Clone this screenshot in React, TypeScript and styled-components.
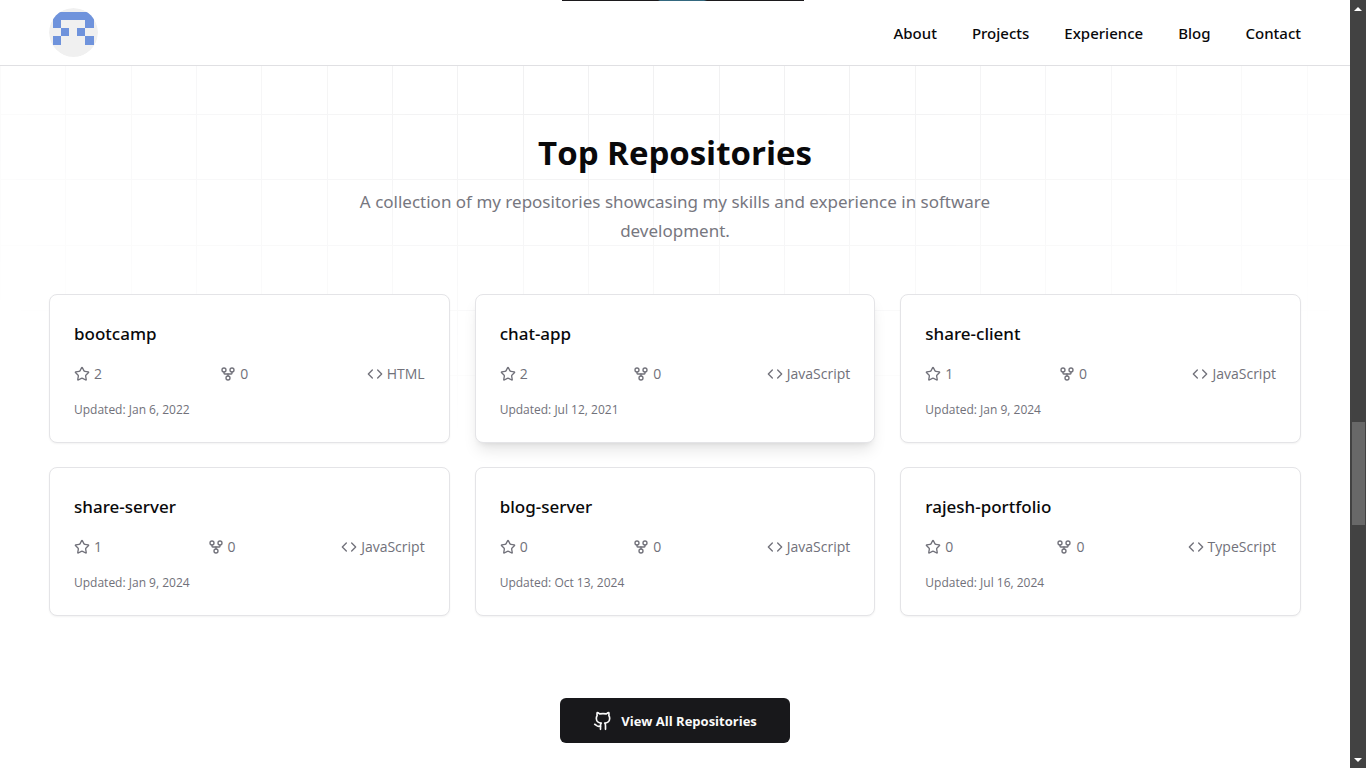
import React from "react";
import styled, { createGlobalStyle } from "styled-components";
import { Code, GitFork, Github, Star } from "lucide-react";

const GlobalStyle = createGlobalStyle`
  *, *::before, *::after { box-sizing: border-box; }
  body {
    margin: 0;
    background: #ffffff;
    color: #09090b;
    font-family: "Noto Sans", "Open Sans", sans-serif;
  }
  h2, h3, p { margin: 0; }
`;

const Shell = styled.div`
  display: flex;
  height: 100vh;
  overflow: hidden;
`;

const Page = styled.div`
  flex: 1;
  min-width: 0;
  display: flex;
  flex-direction: column;
`;

const Header = styled.header`
  display: flex;
  align-items: center;
  justify-content: space-between;
  height: 66px;
  flex-shrink: 0;
  padding: 0 49px;
  background: #ffffff;
  border-bottom: 1px solid #e0e0e3;
`;

const LogoLink = styled.a`
  display: block;
  width: 49px;
  height: 49px;
  border-radius: 50%;
  overflow: hidden;
`;

const Nav = styled.nav`
  display: flex;
  gap: 35px;
`;

const NavLink = styled.a`
  color: #09090b;
  font-size: 15px;
  font-weight: 500;
  line-height: 24px;
  text-decoration: none;
`;

const Section = styled.section`
  position: relative;
  flex: 1;
  display: flex;
  flex-direction: column;
  align-items: center;
  padding: 65px 49px 24px;

  &::before {
    content: "";
    position: absolute;
    inset: 0;
    z-index: -1;
    background-image:
      linear-gradient(to right, #f1f1f2 1px, transparent 1px 65px, #f1f1f2 65px 66px, transparent 66px 131px, #f1f1f2 131px 132px, transparent 132px),
      linear-gradient(to bottom, #f1f1f2 1px, transparent 1px 65px, #f1f1f2 65px 66px, transparent 66px 131px, #f1f1f2 131px 132px, transparent 132px);
    background-size: 196px 196px;
    background-position: 0 48px;
    mask-image: radial-gradient(ellipse 60% 50% at 50% 0%, #000000 20%, transparent 110%);
  }
`;

const Title = styled.h2`
  font-family: "Open Sans", sans-serif;
  font-size: 33px;
  font-weight: 700;
  line-height: 44px;
  text-align: center;
`;

const Subtitle = styled.p`
  max-width: 686px;
  margin-top: 12px;
  color: #77777f;
  font-size: 17px;
  line-height: 29px;
  text-align: center;
`;

const RepoGrid = styled.div`
  display: grid;
  grid-template-columns: repeat(3, minmax(0, 1fr));
  gap: 24px 25px;
  width: 100%;
  margin-top: 49px;
`;

const Card = styled.article<{ $raised?: boolean }>`
  padding: 24px;
  background: #ffffff;
  border: 1px solid #e4e4e7;
  border-radius: 8px;
  box-shadow: ${({ $raised }) =>
    $raised
      ? "0 10px 15px -3px rgba(0, 0, 0, 0.1), 0 4px 6px -4px rgba(0, 0, 0, 0.1)"
      : "0 1px 2px rgba(0, 0, 0, 0.05)"};
`;

const RepoName = styled.h3`
  font-size: 17px;
  font-weight: 500;
  line-height: 30px;
`;

const Stats = styled.div`
  display: flex;
  justify-content: space-between;
  margin: 15px 0 17px;
`;

const Stat = styled.span`
  display: flex;
  align-items: center;
  gap: 4px;
  color: #71717a;
  font-family: "Open Sans", sans-serif;
  font-size: 14px;
  line-height: 20px;
`;

const Updated = styled.p`
  color: #71717a;
  font-family: "Open Sans", sans-serif;
  font-size: 12px;
  line-height: 17px;
`;

const AllButton = styled.button`
  display: flex;
  align-items: center;
  justify-content: center;
  gap: 8px;
  height: 45px;
  margin-top: 82px;
  padding: 0 33px;
  border: 0;
  border-radius: 6px;
  background: #18181b;
  color: #fafafa;
  font-family: "Open Sans", sans-serif;
  font-size: 13px;
  font-weight: 700;
  line-height: 20px;
`;

const TopStrip = styled.div`
  position: fixed;
  top: 0;
  left: 50%;
  width: 242px;
  height: 1px;
  transform: translateX(-50%);
  background: linear-gradient(to right, #1c1a1d 96px, #34687f 98px 142px, #1c1a1d 145px);
`;

const Scrollbar = styled.div`
  display: flex;
  flex-direction: column;
  align-items: center;
  width: 16px;
  padding: 7px 0 6px;
  background: #424242;
`;

const Arrow = styled.span<{ $down?: boolean }>`
  border: 4px solid transparent;
  border-top: ${({ $down }) => ($down ? "4px solid #ffffff" : "0")};
  border-bottom: ${({ $down }) => ($down ? "0" : "4px solid #ffffff")};
`;

const Gap = styled.span<{ $share: number }>`
  flex: ${({ $share }) => $share} 0 0;
`;

const Thumb = styled.span`
  flex: 103 0 0;
  width: 13px;
  margin-left: 1px;
  background: #686868;
`;

const links = ["About", "Projects", "Experience", "Blog", "Contact"];

const repos = [
  { name: "bootcamp", stars: 2, forks: 0, language: "HTML", updated: "Jan 6, 2022" },
  { name: "chat-app", stars: 2, forks: 0, language: "JavaScript", updated: "Jul 12, 2021", raised: true },
  { name: "share-client", stars: 1, forks: 0, language: "JavaScript", updated: "Jan 9, 2024" },
  { name: "share-server", stars: 1, forks: 0, language: "JavaScript", updated: "Jan 9, 2024" },
  { name: "blog-server", stars: 0, forks: 0, language: "JavaScript", updated: "Oct 13, 2024" },
  { name: "rajesh-portfolio", stars: 0, forks: 0, language: "TypeScript", updated: "Jul 16, 2024" },
];

function Logo() {
  return (
    <svg width="49" height="49" viewBox="0 0 49 49" aria-hidden="true">
      <circle cx="24.5" cy="24.5" r="24.5" fill="#f0f0f0" />
      <path
        fill="#6f93dc"
        d="M4 20V12Q5 4 12 4H37Q44 4 45 12V20H36V12H12V20ZM12 20H20V28H12ZM28 20H36V28H28ZM4 28H12V37H4ZM36 28H45V37H36Z"
      />
    </svg>
  );
}

export default function App() {
  return (
    <>
      <GlobalStyle />
      <Shell>
        <Page>
          <Header>
            <LogoLink href="#home" aria-label="Home">
              <Logo />
            </LogoLink>
            <Nav>
              {links.map((link) => (
                <NavLink key={link} href={`#${link.toLowerCase()}`}>
                  {link}
                </NavLink>
              ))}
            </Nav>
          </Header>
          <Section>
            <Title>Top Repositories</Title>
            <Subtitle>
              A collection of my repositories showcasing my skills and experience in software development.
            </Subtitle>
            <RepoGrid>
              {repos.map((repo) => (
                <Card key={repo.name} $raised={repo.raised}>
                  <RepoName>{repo.name}</RepoName>
                  <Stats>
                    <Stat>
                      <Star size={16} />
                      {repo.stars}
                    </Stat>
                    <Stat>
                      <GitFork size={16} />
                      {repo.forks}
                    </Stat>
                    <Stat>
                      <Code size={16} />
                      {repo.language}
                    </Stat>
                  </Stats>
                  <Updated>Updated: {repo.updated}</Updated>
                </Card>
              ))}
            </RepoGrid>
            <AllButton type="button">
              <Github size={20} />
              View All Repositories
            </AllButton>
          </Section>
        </Page>
        <Scrollbar aria-hidden="true">
          <Arrow />
          <Gap $share={411} />
          <Thumb />
          <Gap $share={233} />
          <Arrow $down />
        </Scrollbar>
      </Shell>
      <TopStrip />
    </>
  );
}
